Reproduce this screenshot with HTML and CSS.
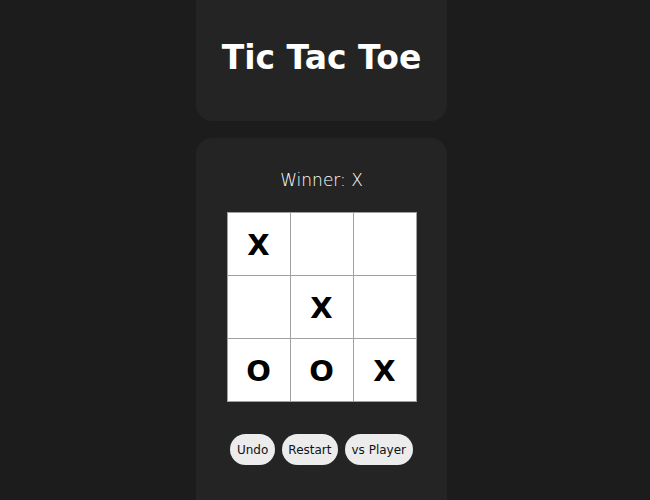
FILE: index.html
```html
<!DOCTYPE html>
<html>
<head>
<meta charset="utf-8">
<link rel="stylesheet" href="styles.css">
</head>
<body>
<div class="app">
  <header class="panel header">
    <h1 class="title">Tic Tac Toe</h1>
  </header>
  <main class="panel game">
    <div class="status">Winner: X</div>
    <div class="board">
      <div class="cell">X</div>
      <div class="cell"></div>
      <div class="cell"></div>
      <div class="cell"></div>
      <div class="cell">X</div>
      <div class="cell"></div>
      <div class="cell">O</div>
      <div class="cell">O</div>
      <div class="cell">X</div>
    </div>
    <div class="controls">
      <button class="btn">Undo</button>
      <button class="btn">Restart</button>
      <button class="btn">vs Player</button>
    </div>
  </main>
</div>
</body>
</html>
```
FILE: styles.css
```css
html, body {
  margin: 0;
  padding: 0;
  background: #1c1c1c;
  height: 100%;
  overflow: hidden;
}
.app {
  width: 251px;
  margin-left: 196px;
  display: flex;
  flex-direction: column;
  gap: 17px;
}
.panel {
  background: #242424;
  border-radius: 16px;
}
.header {
  height: 121px;
  border-radius: 0 0 16px 16px;
  display: flex;
  align-items: center;
  justify-content: center;
}
.title {
  margin: 0 0 6px 0;
  font-family: "DejaVu Sans", sans-serif;
  font-weight: bold;
  font-size: 33px;
  line-height: 40px;
  color: #ffffff;
}
.game {
  height: 400px;
  display: flex;
  flex-direction: column;
  align-items: center;
  padding-top: 32px;
}
.status {
  font-family: "DejaVu Sans", sans-serif;
  font-weight: 300;
  font-size: 17px;
  color: #ffffff;
  line-height: 20px;
}
.board {
  margin-top: 22px;
  display: grid;
  grid-template-columns: repeat(3, 62px);
  grid-template-rows: repeat(3, 62px);
  gap: 1px;
  padding: 1px;
  background: #a0a0a0;
}
.cell {
  background: #ffffff;
  display: flex;
  align-items: center;
  justify-content: center;
  font-family: "DejaVu Sans", sans-serif;
  font-weight: bold;
  font-size: 29px;
  padding-top: 2px;
  color: #000;
}
.controls {
  margin-top: 32px;
  display: flex;
  gap: 7px;
}
.btn {
  height: 31px;
  padding: 0 6.5px;
  border: none;
  border-radius: 16px;
  background: #ececec;
  font-family: "DejaVu Sans", sans-serif;
  font-size: 12px;
  color: #111;
}
```
